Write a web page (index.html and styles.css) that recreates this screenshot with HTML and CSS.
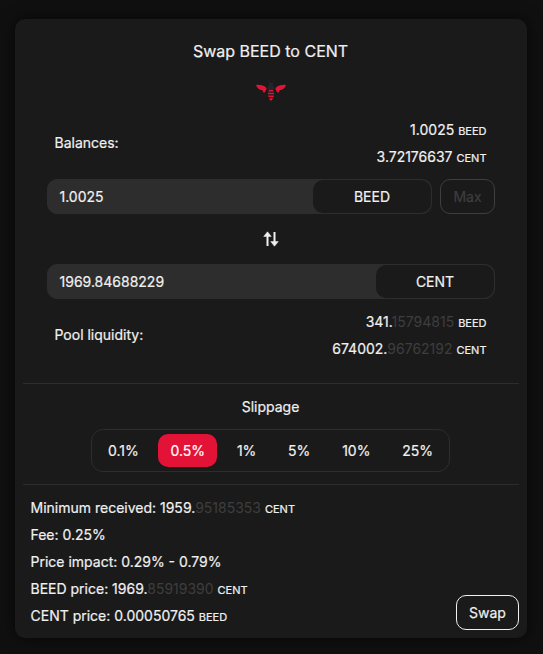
FILE: index.html
```html
<!DOCTYPE html>
<html lang="en">
<head>
<meta charset="utf-8">
<title>Swap</title>
<link rel="stylesheet" href="styles.css">
</head>
<body>
<main class="card">
  <h1 class="title">Swap BEED to CENT</h1>
  <svg class="bee" viewBox="0 0 32 24" width="32" height="24">
    <g fill="#22252b">
      <path d="M14.2 .8 13.4 2.6 14.6 4.6M17.8 .8 18.6 2.6 17.4 4.6" fill="none" stroke="#22252b" stroke-width=".8"/>
      <circle cx="16" cy="5.5" r="2"/>
      <path d="M12.4 9Q13 6 16 6T19.6 9L18.8 11.2H13.2Z"/>
    </g>
    <g fill="#e31337">
      <path d="M1 5.9Q3 5.4 7 6.3 10.6 7.4 11.6 9.3L11 11.2 9.4 13.8Q8 13.8 7.5 11.3 2.2 10.4 1 5.9Z"/>
      <path d="M31 5.9Q29 5.4 25 6.3 21.4 7.4 20.4 9.3L21 11.2 22.6 13.8Q24 13.8 24.5 11.3 29.8 10.4 31 5.9Z"/>
      <path d="M14.2 11H17.8L18.8 12.5H13.2ZM13 13.7H19V15.3H13ZM13 16.5H19L18.6 18.1H13.4ZM13.9 19.2H18.1L16.8 21.6H15.2Z"/>
    </g>
  </svg>
  <section class="form">
    <div class="info">
      <span class="label">Balances:</span>
      <div class="amounts">
        <div>1.0025 <small>BEED</small></div>
        <div>3.72176637 <small>CENT</small></div>
      </div>
    </div>
    <div class="line">
      <div class="field"><span class="value">1.0025</span><span class="token">BEED</span></div>
      <button class="button max" disabled>Max</button>
    </div>
    <svg class="switch" viewBox="0 0 16 16" width="16" height="16">
      <g fill="none" stroke="#f0f0f0" stroke-width="2"><path d="M4.5 15V4M11.5 1V12"/></g>
      <path d="M4.5 .8 8.3 5.4H.7ZM11.5 15.2 7.7 10.6H15.3Z" fill="#f0f0f0" stroke="#f0f0f0" stroke-width=".5" stroke-linejoin="round"/>
    </svg>
    <div class="line">
      <div class="field"><span class="value">1969.84688229</span><span class="token">CENT</span></div>
    </div>
    <div class="info pool">
      <span class="label">Pool liquidity:</span>
      <div class="amounts">
        <div>341.<span class="dim">15794815</span> <small>BEED</small></div>
        <div>674002.<span class="dim">96762192</span> <small>CENT</small></div>
      </div>
    </div>
  </section>
  <section class="slippage">
    <h2 class="subtitle">Slippage</h2>
    <div class="options">
      <span class="option">0.1%</span>
      <span class="option active">0.5%</span>
      <span class="option">1%</span>
      <span class="option">5%</span>
      <span class="option">10%</span>
      <span class="option">25%</span>
    </div>
  </section>
  <section class="summary">
    <div>
      <div>Minimum received: 1959.<span class="dim">95185353</span> <small>CENT</small></div>
      <div>Fee: 0.25%</div>
      <div>Price impact: 0.29% - 0.79%</div>
      <div>BEED price: 1969.<span class="dim">85919390</span> <small>CENT</small></div>
      <div>CENT price: 0.00050765 <small>BEED</small></div>
    </div>
    <button class="button swap">Swap</button>
  </section>
</main>
</body>
</html>
```
FILE: styles.css
```css
* { box-sizing: border-box; }
body {
  margin: 0;
  height: 654px;
  padding: 19px 16px 16px 15px;
  overflow: hidden;
  background: #101010;
  color: #f0f0f0;
  font: 400 14px/27px Inter, sans-serif;
  -webkit-text-stroke: .2px;
}
.card {
  display: flex;
  flex-direction: column;
  height: 619px;
  padding: 19px 8px 8px;
  border-radius: 10px;
  background: #1a1a1a;
  box-shadow: 0 0 16px rgba(0, 0, 0, .65);
}
.title, .subtitle { margin: 0; font-weight: 400; text-align: center; }
.title { padding-right: 1px; font-size: 16px; }
.subtitle { padding-right: 1px; font-size: 14px; }
.bee { display: block; flex: none; margin: 14px auto 0; }
.form { padding: 13px 24px 21px; }
.info {
  display: flex;
  align-items: center;
  justify-content: space-between;
  padding: 0 8.5px 0 7.5px;
}
.label { padding-bottom: 2px; }
.amounts { text-align: right; }
small { font-size: 11px; line-height: 1; }
.dim { color: #3e3e3e; -webkit-text-stroke: 0; }
.line { display: flex; gap: 8px; }
.info + .line { margin-top: 9px; }
.field {
  display: flex;
  flex: 1;
  height: 35px;
  border: 1px solid #2d2d2d;
  border-radius: 10px;
  background: #2d2d2d;
  line-height: 33px;
}
.value { flex: 1; padding-left: 11.5px; }
.token {
  width: 118px;
  border-radius: 10px;
  background: #1a1a1a;
  text-align: center;
}
.button {
  height: 35px;
  padding: 0;
  border: 1px solid #f0f0f0;
  border-radius: 10px;
  background: none;
  color: #f0f0f0;
  font: inherit;
}
.max { width: 55px; border-color: #3e3e3e; color: #3e3e3e; }
.switch { display: block; margin: 17px auto; }
.pool { margin-top: 9px; }
.slippage {
  display: flex;
  flex-direction: column;
  align-items: center;
  gap: 9px;
  padding: 9px 0 12px;
  border: solid #2d2d2d;
  border-width: 1px 0;
}
.options {
  display: flex;
  gap: 7.4px;
  margin-right: 1px;
  padding: 4px;
  border: 1px solid #2d2d2d;
  border-radius: 12px;
}
.option { padding: 0 12.2px; border-radius: 10px; line-height: 33px; }
.active { background: #e31337; color: #fff; }
.summary {
  display: flex;
  align-items: flex-end;
  justify-content: space-between;
  padding: 9px 0 0 7.5px;
}
.swap { width: 63px; margin-bottom: -1px; }
```
